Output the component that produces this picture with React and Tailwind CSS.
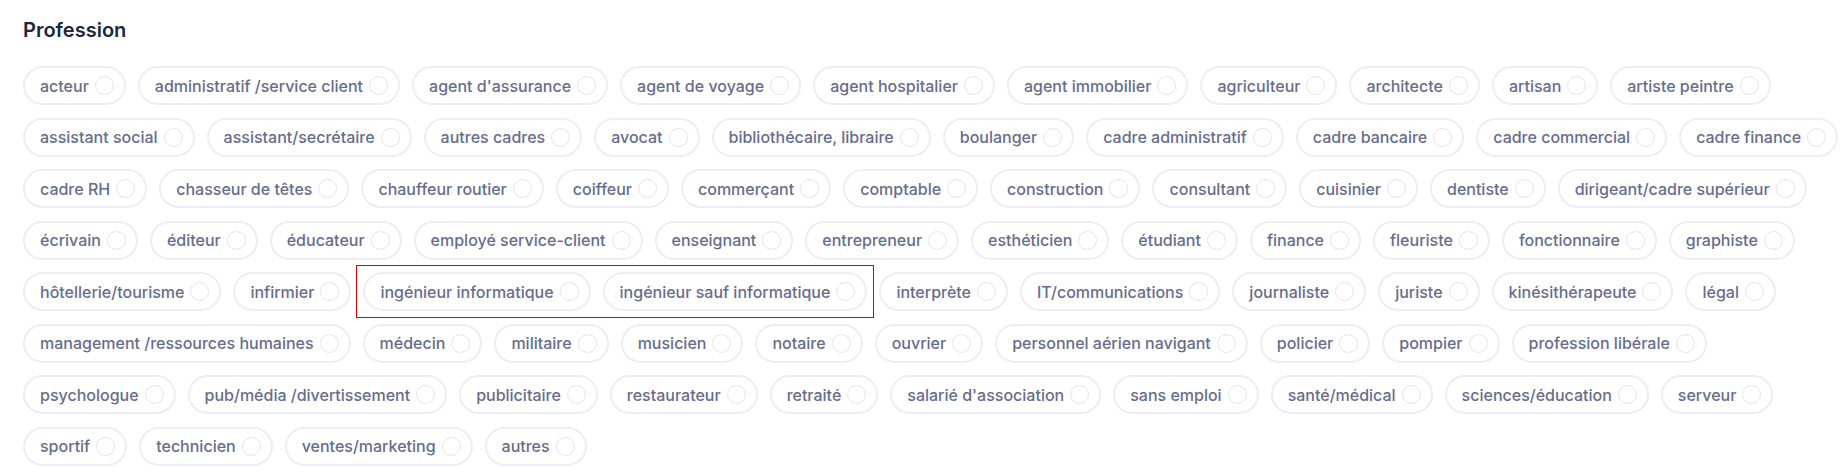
import React from "react";

const rows = [
  ["acteur", "administratif /service client", "agent d'assurance", "agent de voyage", "agent hospitalier", "agent immobilier", "agriculteur", "architecte", "artisan", "artiste peintre"],
  ["assistant social", "assistant/secrétaire", "autres cadres", "avocat", "bibliothécaire, libraire", "boulanger", "cadre administratif", "cadre bancaire", "cadre commercial", "cadre finance"],
  ["cadre RH", "chasseur de têtes", "chauffeur routier", "coiffeur", "commerçant", "comptable", "construction", "consultant", "cuisinier", "dentiste", "dirigeant/cadre supérieur"],
  ["écrivain", "éditeur", "éducateur", "employé service-client", "enseignant", "entrepreneur", "esthéticien", "étudiant", "finance", "fleuriste", "fonctionnaire", "graphiste"],
  ["hôtellerie/tourisme", "infirmier", ["ingénieur informatique", "ingénieur sauf informatique"], "interprète", "IT/communications", "journaliste", "juriste", "kinésithérapeute", "légal"],
  ["management /ressources humaines", "médecin", "militaire", "musicien", "notaire", "ouvrier", "personnel aérien navigant", "policier", "pompier", "profession libérale"],
  ["psychologue", "pub/média /divertissement", "publicitaire", "restaurateur", "retraité", "salarié d'association", "sans emploi", "santé/médical", "sciences/éducation", "serveur"],
  ["sportif", "technicien", "ventes/marketing", "autres"],
];

const Chip = ({ label }) => (
  <label className="flex items-center gap-[6px] h-[39px] pl-[15px] pr-[10px] border-2 border-[#ededf5] rounded-full bg-white text-[16px] font-medium text-[#666d8c] whitespace-nowrap cursor-pointer">
    <span>{label}</span>
    <span className="w-[19px] h-[19px] rounded-full border-[1.5px] border-[#e4e4ee]" />
  </label>
);

export default function App() {
  return (
    <div className="min-h-screen bg-white px-[23px] pt-[16px]" style={{ fontFamily: "Inter, 'Noto Sans', sans-serif" }}>
      <h2 className="text-[20px] font-semibold text-[#1c2640] leading-[28px]">Profession</h2>
      <div className="mt-[22px] flex flex-col gap-y-[12.5px]">
        {rows.map((row, i) => (
          <div key={i} className="flex gap-x-[12px]">
            {row.map((item, j) =>
              Array.isArray(item) ? (
                <div key={j} className="flex gap-x-[12px] -m-[7px] p-[6px] border-[1.5px] border-[#e00000]">
                  {item.map((sub) => (
                    <Chip key={sub} label={sub} />
                  ))}
                </div>
              ) : (
                <Chip key={j} label={item} />
              )
            )}
          </div>
        ))}
      </div>
    </div>
  );
}
